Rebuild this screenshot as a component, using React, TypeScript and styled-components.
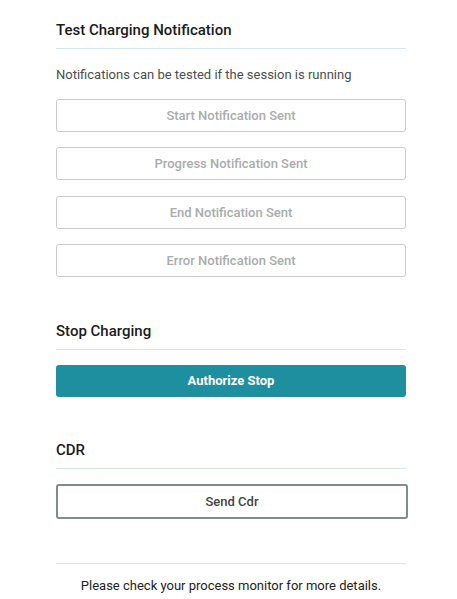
import React from "react";
import styled, { createGlobalStyle } from "styled-components";

const Global = createGlobalStyle`
  html, body { margin: 0; padding: 0; background: #ffffff; }
  body { font-family: Roboto, "Liberation Sans", Arial, sans-serif; }
  * { box-sizing: border-box; }
`;

const Page = styled.div`
  width: 457px;
  padding: 20px 51px 0 56px;
  display: flex;
  flex-direction: column;
`;

const Title = styled.h2<{ $top?: number }>`
  margin: ${(p) => p.$top ?? 0}px 0 0;
  padding-bottom: 8px;
  border-bottom: 1px solid #d2e8ec;
  font-size: 15px;
  line-height: 20px;
  font-weight: 500;
  color: #1b1b1b;
`;

const Note = styled.p`
  margin: 17px 0 0;
  font-size: 13px;
  line-height: 18px;
  color: #4d4d4d;
`;

const ButtonStack = styled.div`
  margin-top: 15px;
  display: flex;
  flex-direction: column;
  gap: 15.33px;
`;

const OutlineButton = styled.button`
  height: 33px;
  width: 100%;
  border: 1px solid #c9cccc;
  border-radius: 3px;
  background: #ffffff;
  font-family: inherit;
  font-size: 13px;
  font-weight: 500;
  color: #a9acad;
`;

const PrimaryButton = styled.button`
  margin-top: 15px;
  height: 32px;
  width: 100%;
  border: none;
  border-radius: 3px;
  background: #1e8f9f;
  font-family: inherit;
  font-size: 13px;
  font-weight: 700;
  color: #ffffff;
`;

const FocusButton = styled.button`
  margin-top: 15px;
  height: 35px;
  width: calc(100% + 2px);
  border: 2px solid #808b8b;
  border-radius: 3px;
  background: #ffffff;
  font-family: inherit;
  font-size: 13px;
  font-weight: 500;
  color: #3f4444;
`;

const Divider = styled.hr`
  margin: 44px 0 0;
  border: none;
  border-top: 1px solid #d2e8ec;
`;

const Footer = styled.p`
  margin: 13px 0 0;
  text-align: center;
  font-size: 13px;
  line-height: 18px;
  color: #222222;
`;

export default function App() {
  return (
    <>
      <Global />
      <Page>
        <Title>Test Charging Notification</Title>
        <Note>Notifications can be tested if the session is running</Note>
        <ButtonStack>
          <OutlineButton disabled>Start Notification Sent</OutlineButton>
          <OutlineButton disabled>Progress Notification Sent</OutlineButton>
          <OutlineButton disabled>End Notification Sent</OutlineButton>
          <OutlineButton disabled>Error Notification Sent</OutlineButton>
        </ButtonStack>
        <Title $top={44}>Stop Charging</Title>
        <PrimaryButton>Authorize Stop</PrimaryButton>
        <Title $top={43}>CDR</Title>
        <FocusButton>Send Cdr</FocusButton>
        <Divider />
        <Footer>Please check your process monitor for more details.</Footer>
      </Page>
    </>
  );
}
